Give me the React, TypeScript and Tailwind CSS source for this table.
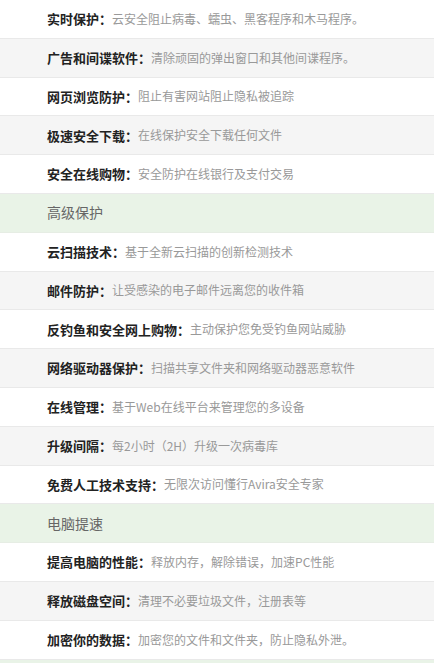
import React from "react";

type Row = { type: "item"; title: string; desc: string } | { type: "header"; title: string };

const rows: Row[] = [
  { type: "item", title: "实时保护", desc: "云安全阻止病毒、蠕虫、黑客程序和木马程序。" },
  { type: "item", title: "广告和间谍软件", desc: "清除顽固的弹出窗口和其他间谍程序。" },
  { type: "item", title: "网页浏览防护", desc: "阻止有害网站阻止隐私被追踪" },
  { type: "item", title: "极速安全下载", desc: "在线保护安全下载任何文件" },
  { type: "item", title: "安全在线购物", desc: "安全防护在线银行及支付交易" },
  { type: "header", title: "高级保护" },
  { type: "item", title: "云扫描技术", desc: "基于全新云扫描的创新检测技术" },
  { type: "item", title: "邮件防护", desc: "让受感染的电子邮件远离您的收件箱" },
  { type: "item", title: "反钓鱼和安全网上购物", desc: "主动保护您免受钓鱼网站威胁" },
  { type: "item", title: "网络驱动器保护", desc: "扫描共享文件夹和网络驱动器恶意软件" },
  { type: "item", title: "在线管理", desc: "基于Web在线平台来管理您的多设备" },
  { type: "item", title: "升级间隔", desc: "每2小时（2H）升级一次病毒库" },
  { type: "item", title: "免费人工技术支持", desc: "无限次访问懂行Avira安全专家" },
  { type: "header", title: "电脑提速" },
  { type: "item", title: "提高电脑的性能", desc: "释放内存，解除错误，加速PC性能" },
  { type: "item", title: "释放磁盘空间", desc: "清理不必要垃圾文件，注册表等" },
  { type: "item", title: "加密你的数据", desc: "加密您的文件和文件夹，防止隐私外泄。" },
  { type: "header", title: "" },
];

export default function App() {
  let idx = 0;
  return (
    <div className="w-[434px] h-[663px] overflow-hidden bg-white font-['Noto_Sans_CJK_SC','Noto_Sans',sans-serif]">
      {rows.map((r, i) => {
        if (r.type === "header") {
          idx = 0;
          return (
            <div
              key={i}
              className="h-[38.8px] flex items-center pl-[47px] bg-[#e9f3e7] border-b border-[#e6ede4] text-[14px] text-[#666]"
            >
              {r.title}
            </div>
          );
        }
        const gray = idx % 2 === 1;
        idx++;
        return (
          <div
            key={i}
            className={`h-[38.8px] flex items-center pl-[47px] border-b border-[#e9e9e9] ${
              gray ? "bg-[#f5f5f5]" : "bg-white"
            }`}
          >
            <span className="text-[13px] font-semibold text-[#222]">{r.title}：</span>
            <span className="text-[12px] text-[#999]">{r.desc}</span>
          </div>
        );
      })}
    </div>
  );
}
